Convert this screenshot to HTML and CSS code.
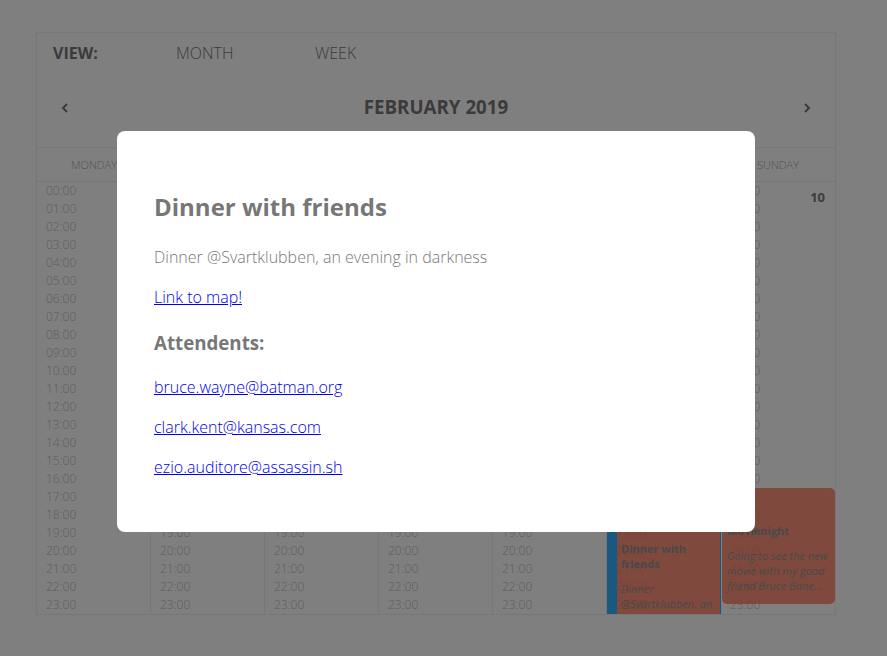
FILE: index.html
```html
<!DOCTYPE html>
<html lang="en">
<head>
<meta charset="utf-8">
<title>Calendar</title>
<link rel="stylesheet" href="styles.css">
</head>
<body>
<div class="calendar">
  <div class="toolbar">
    <span class="view-label">VIEW:</span>
    <button class="view-btn">MONTH</button>
    <button class="view-btn">WEEK</button>
  </div>
  <div class="nav">
    <button class="nav-btn" aria-label="Previous"><svg width="8" height="12" viewBox="0 0 8 12"><polyline points="6,3 2,7 6,11" fill="none" stroke="#777" stroke-width="2"/></svg></button>
    <h3 class="month-title">FEBRUARY 2019</h3>
    <button class="nav-btn" aria-label="Next"><svg width="8" height="12" viewBox="0 0 8 12"><polyline points="2,3 6,7 2,11" fill="none" stroke="#777" stroke-width="2"/></svg></button>
  </div>
  <div class="days-head">
    <div>MONDAY</div><div>TUESDAY</div><div>WEDNESDAY</div><div>THURSDAY</div><div>FRIDAY</div><div>SATURDAY</div><div>SUNDAY</div>
  </div>
  <div class="days-body">
    <div class="day"><span class="date">4</span><ul class="hours"><li>00:00</li><li>01:00</li><li>02:00</li><li>03:00</li><li>04:00</li><li>05:00</li><li>06:00</li><li>07:00</li><li>08:00</li><li>09:00</li><li>10:00</li><li>11:00</li><li>12:00</li><li>13:00</li><li>14:00</li><li>15:00</li><li>16:00</li><li>17:00</li><li>18:00</li><li>19:00</li><li>20:00</li><li>21:00</li><li>22:00</li><li>23:00</li></ul></div>
    <div class="day"><span class="date">5</span><ul class="hours"><li>00:00</li><li>01:00</li><li>02:00</li><li>03:00</li><li>04:00</li><li>05:00</li><li>06:00</li><li>07:00</li><li>08:00</li><li>09:00</li><li>10:00</li><li>11:00</li><li>12:00</li><li>13:00</li><li>14:00</li><li>15:00</li><li>16:00</li><li>17:00</li><li>18:00</li><li>19:00</li><li>20:00</li><li>21:00</li><li>22:00</li><li>23:00</li></ul></div>
    <div class="day"><span class="date">6</span><ul class="hours"><li>00:00</li><li>01:00</li><li>02:00</li><li>03:00</li><li>04:00</li><li>05:00</li><li>06:00</li><li>07:00</li><li>08:00</li><li>09:00</li><li>10:00</li><li>11:00</li><li>12:00</li><li>13:00</li><li>14:00</li><li>15:00</li><li>16:00</li><li>17:00</li><li>18:00</li><li>19:00</li><li>20:00</li><li>21:00</li><li>22:00</li><li>23:00</li></ul></div>
    <div class="day"><span class="date">7</span><ul class="hours"><li>00:00</li><li>01:00</li><li>02:00</li><li>03:00</li><li>04:00</li><li>05:00</li><li>06:00</li><li>07:00</li><li>08:00</li><li>09:00</li><li>10:00</li><li>11:00</li><li>12:00</li><li>13:00</li><li>14:00</li><li>15:00</li><li>16:00</li><li>17:00</li><li>18:00</li><li>19:00</li><li>20:00</li><li>21:00</li><li>22:00</li><li>23:00</li></ul></div>
    <div class="day"><span class="date">8</span><ul class="hours"><li>00:00</li><li>01:00</li><li>02:00</li><li>03:00</li><li>04:00</li><li>05:00</li><li>06:00</li><li>07:00</li><li>08:00</li><li>09:00</li><li>10:00</li><li>11:00</li><li>12:00</li><li>13:00</li><li>14:00</li><li>15:00</li><li>16:00</li><li>17:00</li><li>18:00</li><li>19:00</li><li>20:00</li><li>21:00</li><li>22:00</li><li>23:00</li></ul></div>
    <div class="day"><span class="date">9</span><ul class="hours"><li>00:00</li><li>01:00</li><li>02:00</li><li>03:00</li><li>04:00</li><li>05:00</li><li>06:00</li><li>07:00</li><li>08:00</li><li>09:00</li><li>10:00</li><li>11:00</li><li>12:00</li><li>13:00</li><li>14:00</li><li>15:00</li><li>16:00</li><li>17:00</li><li>18:00</li><li>19:00</li><li>20:00</li><li>21:00</li><li>22:00</li><li>23:00</li></ul>
      <div class="event event-dinner">
        <div class="event-title">Dinner with friends</div>
        <div class="event-desc">Dinner @Svartklubben, an evening in darkness</div>
      </div>
    </div>
    <div class="day"><span class="date">10</span><ul class="hours"><li>00:00</li><li>01:00</li><li>02:00</li><li>03:00</li><li>04:00</li><li>05:00</li><li>06:00</li><li>07:00</li><li>08:00</li><li>09:00</li><li>10:00</li><li>11:00</li><li>12:00</li><li>13:00</li><li>14:00</li><li>15:00</li><li>16:00</li><li>17:00</li><li>18:00</li><li>19:00</li><li>20:00</li><li>21:00</li><li>22:00</li><li>23:00</li></ul>
      <div class="event event-movie">
        <div class="event-title">Movienight</div>
        <div class="event-desc">Going to see the new movie with my good friend Bruce Bane...</div>
      </div>
    </div>
  </div>
</div>

<div class="overlay">
  <div class="modal">
    <h2 class="modal-title">Dinner with friends</h2>
    <p class="modal-desc">Dinner @Svartklubben, an evening in darkness</p>
    <p class="modal-link"><a href="#">Link to map!</a></p>
    <h3 class="modal-sub">Attendents:</h3>
    <p class="attendee"><a href="#">bruce.wayne@batman.org</a></p>
    <p class="attendee"><a href="#">clark.kent@kansas.com</a></p>
    <p class="attendee"><a href="#">ezio.auditore@assassin.sh</a></p>
  </div>
</div>
</body>
</html>
```

FILE: styles.css
```css
* { box-sizing: border-box; }

html, body {
  margin: 0;
  padding: 0;
  background: #fff;
  font-family: "Open Sans", "Noto Sans", sans-serif;
  color: #777;
}

.calendar {
  margin: 32px 0 0 36px;
  width: 800px;
  border: 1px solid #eee;
}

button {
  background: none;
  border: 0;
  padding: 0;
  margin: 0;
  font: inherit;
  color: inherit;
  cursor: pointer;
}

.toolbar {
  display: flex;
  align-items: center;
  height: 40px;
  padding-left: 16px;
  font-size: 16px;
}

.view-label {
  width: 123px;
  font-weight: 700;
}

.view-btn {
  width: 139px;
  text-align: left;
  font-weight: 300;
}

.nav {
  display: flex;
  justify-content: space-between;
  align-items: center;
  height: 75px;
  padding: 21px 24px 27px;
  border-bottom: 1px solid #eee;
}

.nav-btn {
  display: flex;
  width: 8px;
  height: 12px;
}

.month-title {
  margin: 0;
  font-size: 18.72px;
  font-weight: 700;
  line-height: 26px;
}

.days-head {
  display: grid;
  grid-template-columns: repeat(7, 1fr);
  height: 34px;
  border-bottom: 1px solid #eee;
  font-size: 11px;
  font-weight: 300;
  color: #aaa;
}

.days-head div {
  display: flex;
  align-items: center;
  justify-content: center;
}

.days-body {
  display: grid;
  grid-template-columns: repeat(7, 1fr);
  height: 432px;
  overflow: hidden;
}

.day {
  position: relative;
  border-right: 1px solid #eee;
  padding-left: 9px;
}

.day:last-child {
  border-right: 0;
}

.hours {
  list-style: none;
  margin: 0;
  padding: 0;
  font-size: 12px;
  font-weight: 300;
  line-height: 18px;
  color: #bbb;
}

.date {
  position: absolute;
  top: 6px;
  right: 10px;
  font-size: 13px;
  font-weight: 700;
  line-height: 18px;
  color: #777;
}

.event {
  position: absolute;
  background: #ff775b;
  opacity: 0.8;
  color: #777;
  font-size: 11px;
  line-height: 15px;
}

.event-title {
  font-weight: 700;
}

.event-desc {
  font-style: italic;
  margin-top: 10px;
}

.event-dinner {
  top: 324px;
  bottom: -40px;
  left: 0;
  right: -1px;
  border-left: 10px solid #00a0ff;
  border-right: 1px solid #00a0ff;
  padding: 35px 4px 0 4px;
}

.event-movie {
  top: 306px;
  height: 116px;
  left: 1px;
  right: 0;
  border-radius: 5px;
  padding: 35px 5px 0 5px;
}

.overlay {
  position: fixed;
  inset: 0;
  background: rgba(0, 0, 0, 0.5);
  padding: 131px 0 0 117px;
}

.modal {
  width: 638px;
  background: #fff;
  border-radius: 8px;
  padding: 40px 37px 36px;
  color: #777;
}

.modal-title {
  margin: 19px 0 23px;
  font-size: 24px;
  font-weight: 700;
}

.modal-desc {
  margin: 0 0 18px;
  font-size: 16px;
  font-weight: 300;
}

.modal-link {
  margin: 0;
  font-size: 16px;
  font-weight: 300;
}

.modal-sub {
  margin: 22px 0 21px;
  font-size: 18.72px;
  font-weight: 700;
}

.attendee {
  margin: 0 0 18px;
  font-size: 16px;
  font-weight: 300;
}

.modal a {
  color: #0000ee;
}
```
